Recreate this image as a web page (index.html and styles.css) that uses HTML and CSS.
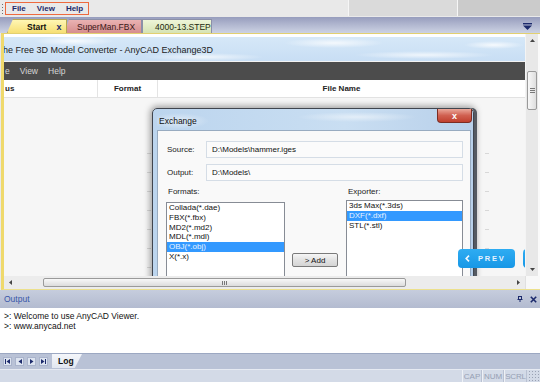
FILE: index.html
```html
<!DOCTYPE html>
<html>
<head>
<meta charset="utf-8">
<link rel="stylesheet" href="styles.css">
</head>
<body>
<div class="app">
  <div class="menubar">
    <div class="grip"></div>
    <div class="menu-box"><span>File</span><span>View</span><span>Help</span></div>
    <div class="mb-fill"></div>
    <div class="mb-block b1"></div>
    <div class="mb-block b2"></div>
  </div>
  <div class="tabstrip">
    <div class="tab tab-start"><span class="tab-label">Start</span><span class="tab-x">x</span></div>
    <div class="tab tab-fbx"><span class="tab-label">SuperMan.FBX</span></div>
    <div class="tab tab-step"><span class="tab-label">4000-13.STEP</span></div>
    <div class="tab-fill"></div>
    <svg class="tab-menu" width="9" height="7" viewBox="0 0 9 7"><rect x="0" y="0" width="9" height="1.4" fill="#1c2a6c"/><path d="M0 2.4H9L4.5 7Z" fill="#1c2a6c"/></svg>
  </div>
  <div class="doc">
    <div class="doc-main">
      <div class="view">
        <div class="banner">he Free 3D Model Converter - AnyCAD Exchange3D</div>
        <div class="darkbar"><span>e</span><span>View</span><span>Help</span></div>
        <div class="colhead">
          <div class="col c1">us</div>
          <div class="col c2">Format</div>
          <div class="col c3">File Name</div>
        </div>
        <div class="canvas">
          <div class="ticks ticks-left"></div>
          <div class="ticks ticks-right"></div>
          <div class="dialog">
            <div class="dlg-title">Exchange</div>
            <div class="dlg-close">x</div>
            <div class="dlg-client">
              <div class="field"><span class="field-label">Source:</span><div class="field-box">D:\Models\hammer.iges</div></div>
              <div class="field"><span class="field-label">Output:</span><div class="field-box">D:\Models\</div></div>
              <div class="lists">
                <div class="list-col fmt">
                  <div class="list-label">Formats:</div>
                  <ul class="listbox">
                    <li>Collada(*.dae)</li>
                    <li>FBX(*.fbx)</li>
                    <li>MD2(*.md2)</li>
                    <li>MDL(*.mdl)</li>
                    <li class="sel">OBJ(*.obj)</li>
                    <li>X(*.x)</li>
                  </ul>
                </div>
                <div class="add-col"><div class="add-btn">&gt; Add</div></div>
                <div class="list-col exp">
                  <div class="list-label">Exporter:</div>
                  <ul class="listbox">
                    <li>3ds Max(*.3ds)</li>
                    <li class="sel">DXF(*.dxf)</li>
                    <li>STL(*.stl)</li>
                  </ul>
                </div>
              </div>
            </div>
          </div>
          <div class="prev-btn"><svg width="5" height="7" viewBox="0 0 5 7"><path d="M4 0.6L1.2 3.5L4 6.4" stroke="#f2f8ff" stroke-width="1.6" fill="none"/></svg><span>PREV</span></div>
          <div class="next-btn"></div>
        </div>
      </div>
      <div class="vscroll">
        <div class="sb-btn"><svg width="5" height="3" viewBox="0 0 5 3"><path d="M0 3L2.5 0L5 3Z" fill="#444"/></svg></div>
        <div class="vthumb"><i></i><i></i><i></i></div>
        <div class="vtrack"></div>
        <div class="sb-btn"><svg width="5" height="3" viewBox="0 0 5 3"><path d="M0 0L2.5 3L5 0Z" fill="#444"/></svg></div>
      </div>
      <div class="edge"></div>
    </div>
    <div class="hscroll">
      <div class="sb-btn h"><svg width="3" height="5" viewBox="0 0 3 5"><path d="M3 0L0 2.5L3 5Z" fill="#444"/></svg></div>
      <div class="hthumb"><i></i><i></i><i></i></div>
      <div class="htrack"></div>
      <div class="sb-btn h"><svg width="3" height="5" viewBox="0 0 3 5"><path d="M0 0L3 2.5L0 5Z" fill="#444"/></svg></div>
      <div class="corner"></div>
    </div>
  </div>
  <div class="output">
    <div class="out-head">
      <span class="out-title">Output</span>
      <svg class="pin" width="6" height="6" viewBox="0 0 6 6"><path d="M1 0.5H5M1.5 0.5V3.5M4.5 0.5V3.5M0.5 3.5H5.5M3 3.5V6" stroke="#1c2a6c" stroke-width="1" fill="none"/></svg>
      <svg class="close" width="7" height="7" viewBox="0 0 7 7"><path d="M0.8 0.8L6.2 6.2M6.2 0.8L0.8 6.2" stroke="#1c2a6c" stroke-width="1.6"/></svg>
    </div>
    <div class="out-body">
      <div>&gt;: Welcome to use AnyCAD Viewer.</div>
      <div>&gt;: www.anycad.net</div>
    </div>
    <div class="out-tabs">
      <div class="nav">
        <div class="nav-btn"><svg width="5" height="5" viewBox="0 0 5 5"><path d="M0.5 0V5" stroke="#1c2a6c" stroke-width="1"/><path d="M5 0L1.5 2.5L5 5Z" fill="#1c2a6c"/></svg></div>
        <div class="nav-btn"><svg width="4" height="5" viewBox="0 0 4 5"><path d="M4 0L0.5 2.5L4 5Z" fill="#1c2a6c"/></svg></div>
        <div class="nav-btn"><svg width="4" height="5" viewBox="0 0 4 5"><path d="M0 0L3.5 2.5L0 5Z" fill="#1c2a6c"/></svg></div>
        <div class="nav-btn"><svg width="5" height="5" viewBox="0 0 5 5"><path d="M0 0L3.5 2.5L0 5Z" fill="#1c2a6c"/><path d="M4.5 0V5" stroke="#1c2a6c" stroke-width="1"/></svg></div>
      </div>
      <div class="log-tab">Log</div>
    </div>
  </div>
  <div class="status">
    <div class="pane">CAP</div>
    <div class="pane">NUM</div>
    <div class="pane">SCRL</div>
    <div class="sgrip"></div>
  </div>
</div>
</body>
</html>
```

FILE: styles.css
```css
* { box-sizing: border-box; }
html, body { margin: 0; padding: 0; }
body {
  width: 540px;
  height: 382px;
  overflow: hidden;
  font-family: "Liberation Sans", Arial, sans-serif;
  font-size: 8.5px;
  color: #111;
  background: #e9e9e9;
}
.app { display: flex; flex-direction: column; width: 540px; height: 382px; }

/* menubar */
.menubar { height: 17px; display: flex; align-items: center; background: #e9e9e9; }
.grip { width: 1px; height: 10px; margin-left: 2px; background: repeating-linear-gradient(#6f6f6f 0 1px, transparent 1px 3px); }
.menu-box {
  margin-left: 2px; height: 13px; display: flex; align-items: center; gap: 11px;
  padding: 0 5px 0 6px; border: 1.5px solid #ee6a3e; color: #1e2a6a; font-weight: 600; font-size: 8px;
}
.mb-fill { flex: 1; }
.mb-block { height: 16px; align-self: flex-start; border-left: 1px solid #f6f6f6; }
.b1 { width: 109px; background: #dadada; }
.b2 { width: 83px; background: #cbcbcb; }

/* tabs */
.tabstrip {
  height: 16px; display: flex; align-items: flex-end; padding-left: 7px;
  background: linear-gradient(#979dbd, #c2c8dc 80%, #ccd2e4);
}
.tab { height: 14px; display: flex; align-items: center; position: relative; border: 1px solid #8c90a8; border-bottom: none; }
.tab-label { white-space: nowrap; }
.tab-start {
  width: 60px; z-index: 2; padding-left: 19px; font-weight: bold; color: #111;
  background: linear-gradient(#fff6b4, #f6df74);
  clip-path: polygon(0 100%, 6px 0, 100% 0, 100% 100%);
  border-color: #b8a850;
}
.tab-x { margin-left: 10px; color: #1c2a6c; font-weight: bold; font-size: 9px; }
.tab-fbx {
  width: 77px; margin-left: -2px; padding-left: 11px; color: #3a1818;
  background: linear-gradient(#eab2b2, #d68e8e);
  clip-path: polygon(0 100%, 4px 0, 100% 0, 100% 100%);
}
.tab-step {
  width: 70px; padding-left: 12px; color: #1e2a10;
  background: linear-gradient(#eef5d8, #d6e3b4);
}
.tab-fill { flex: 1; }
.tab-menu { align-self: center; margin-right: 8px; margin-top: 2px; }

/* document */
.doc {
  height: 257px; margin-left: 1px; display: flex; flex-direction: column;
  border-top: 1px solid #e2d070; border-bottom: 1px solid #ece08c; border-left: 3px solid #efd96c;
  background: #fff;
}
.doc-main { flex: 1; display: flex; min-height: 0; }
.view { flex: 1; display: flex; flex-direction: column; padding-top: 3px; background: #fff; overflow: hidden; min-width: 0; }
.banner {
  height: 24px; font-size: 9px; color: #222; white-space: nowrap;
  padding-top: 2px; line-height: 22px; text-indent: -1px;
  background:
    radial-gradient(ellipse 40px 5px at 70px 4px, rgba(255,255,255,.8), transparent),
    radial-gradient(ellipse 60px 4px at 200px 20px, rgba(255,255,255,.7), transparent),
    radial-gradient(ellipse 50px 5px at 330px 6px, rgba(255,255,255,.75), transparent),
    radial-gradient(ellipse 70px 4px at 420px 18px, rgba(255,255,255,.7), transparent),
    radial-gradient(ellipse 30px 4px at 490px 8px, rgba(255,255,255,.8), transparent),
    linear-gradient(#d6e8f8, #c8def4);
}
.darkbar {
  height: 19px; background: #4c4c4c; display: flex; align-items: center; gap: 10px;
  padding-left: 1px; color: #d6d6d6; border-top: 1px solid #f2f2f2;
}
.colhead {
  height: 18px; display: flex; background: #fff; border-bottom: 1px solid #e2e2e2;
  font-size: 8px; font-weight: bold; color: #222;
}
.col { display: flex; align-items: center; }
.c1 { width: 93px; padding-left: 1px; }
.c2 { width: 60px; justify-content: center; border-left: 1px solid #e4e4e4; }
.c3 { flex: 1; justify-content: center; border-left: 1px solid #e4e4e4; }

.canvas { flex: 1; position: relative; background: #f6f6f6; overflow: hidden; }
.ticks { position: absolute; top: 37px; width: 4px; height: 140px; background: repeating-linear-gradient(transparent 0 18px, #d8d8d8 18px 19px); }
.ticks-left { left: 143px; }
.ticks-right { left: 481px; }

/* dialog */
.dialog {
  position: absolute; left: 148px; top: 10px; width: 322px; height: 200px;
  border: 1px solid #40454e; border-radius: 5px 5px 0 0;
  padding: 0 2px 4px 4px; display: flex; flex-direction: column;
  background: linear-gradient(90deg, #bcd5ee, #c9def2 60%, #b8d0ea);
  box-shadow: 3px 0 0 #555a62, 0 0 6px 2px rgba(0,0,0,.35);
}
.dlg-title {
  height: 21px; display: flex; align-items: center; padding-left: 2px; padding-top: 2px; color: #111;
  background:
    radial-gradient(ellipse 30px 8px at 22px 12px, rgba(255,255,255,.55), transparent),
    radial-gradient(ellipse 60px 5px at 200px 8px, rgba(255,255,255,.5), transparent);
}
.dlg-close {
  position: absolute; right: 1px; top: 0; width: 35px; height: 14px;
  border: 1px solid #7c2c22; border-top: none; border-radius: 0 0 4px 4px;
  background: linear-gradient(#eaa89a, #d06050 50%, #c0402e);
  color: #fff; font-weight: bold; font-size: 9px; display: flex; align-items: center; justify-content: center;
}
.dlg-client { flex: 1; background: #f9f9f9; border: 1px solid #98abc0; padding-top: 10px; }
.field { display: flex; align-items: center; padding-left: 9px; margin-bottom: 6px; font-size: 8px; }
.field-label { width: 39px; color: #222; }
.field-box {
  width: 257px; height: 17px; border: 1px solid #d5dde6; background: #fbfbfb;
  display: flex; align-items: center; padding-left: 5px; color: #111;
}
.lists { display: flex; align-items: flex-start; padding-left: 8px; font-size: 8px; }
.list-col { display: flex; flex-direction: column; }
.fmt { width: 119px; }
.exp { width: 117px; margin-left: 8px; }
.list-label { height: 10px; line-height: 10px; padding-left: 2px; color: #222; }
.listbox { margin: 0; padding: 0; list-style: none; height: 100px; border: 1px solid #878c95; background: #fff; }
.fmt .listbox { margin-top: 5px; }
.exp .listbox { margin-top: 3px; }
.listbox li { height: 9.8px; line-height: 9.8px; padding-left: 2px; color: #111; white-space: nowrap; }
.listbox li.sel { background: #3399ff; color: #e8f2ff; }
.add-col { width: 46px; margin-left: 7px; padding-top: 66px; }
.add-btn {
  height: 14px; border: 1px solid #7a7a7a; border-radius: 2px;
  background: linear-gradient(#f6f6f6, #e2e2e2 50%, #d4d4d4);
  display: flex; align-items: center; justify-content: center; color: #111;
}

.prev-btn {
  position: absolute; left: 454px; top: 151px; width: 57px; height: 19px; border-radius: 4px;
  background: linear-gradient(#2eacf2, #1797e6);
  display: flex; align-items: center; padding-left: 7px; gap: 8px;
  color: #e6f3ff; font-size: 7.5px; font-weight: bold; letter-spacing: 1.8px;
}
.next-btn { position: absolute; left: 519px; top: 151px; width: 20px; height: 19px; border-radius: 4px; background: linear-gradient(#2eacf2, #1797e6); }

/* scrollbars */
.vscroll { width: 13px; display: flex; flex-direction: column; background: #e8e8e8; border-left: 1px solid #f4f4f4; }
.sb-btn { width: 12px; height: 13px; display: flex; align-items: center; justify-content: center; flex-shrink: 0; }
.vthumb {
  margin: 24px 0 0 1px; width: 10px; height: 39px; border: 1px solid #9a9a9a; border-radius: 2px;
  background: linear-gradient(90deg, #f8f8f8, #dedede);
  display: flex; flex-direction: column; align-items: center; justify-content: center; gap: 1px;
}
.vthumb i { display: block; width: 5px; height: 1px; background: #777; }
.vtrack { flex: 1; }
.edge { width: 2px; background: #fafafa; }
.hscroll { height: 13px; display: flex; align-items: center; background: #ececec; }
.sb-btn.h { width: 13px; }
.hthumb {
  margin-left: 26px; width: 363px; height: 9px; border: 1px solid #9a9a9a; border-radius: 2px;
  background: linear-gradient(#f8f8f8, #dcdcdc);
  display: flex; align-items: center; justify-content: center; gap: 1px;
}
.hthumb i { display: block; width: 1px; height: 4px; background: #777; }
.htrack { flex: 1; }
.corner { width: 15px; height: 13px; background: #f8f8f8; border-left: 1px solid #e0e0e0; }

/* output */
.output { display: flex; flex-direction: column; }
.out-head {
  height: 18px; display: flex; align-items: center; padding: 0 3px 0 4px;
  background: linear-gradient(#c6cddd, #b3bbd0);
}
.out-title { flex: 1; color: #3856a8; }
.pin { margin-right: 7px; }
.out-body { height: 45px; background: #fff; padding: 4px 0 0 4px; line-height: 9.5px; color: #111; }
.out-tabs {
  height: 16px; display: flex; align-items: stretch; background: #b9c2d6; border-top: 1px solid #9ca8c2;
}
.nav { display: flex; align-items: center; gap: 3px; padding-left: 3px; width: 52px; }
.nav-btn {
  width: 9px; height: 9px; background: #dde4f0; border: 1px solid #aab4cc;
  display: flex; align-items: center; justify-content: center;
}
.log-tab {
  width: 30px; background: linear-gradient(#f4f6fa, #e2e7f0); font-weight: bold; color: #111;
  padding-left: 6px; display: flex; align-items: center; font-size: 8.5px;
  clip-path: polygon(0 0, 100% 0, 76% 100%, 0 100%);
  margin-bottom: 1px;
}

/* status */
.status {
  height: 13px; display: flex; justify-content: flex-end; align-items: stretch;
  background: #d3dae7; border-top: 1px solid #e6eaf2;
}
.pane {
  display: flex; align-items: center; justify-content: center; color: #96a0b4; font-size: 8px;
  border-left: 1px solid #eef1f6; border-right: 1px solid #b9c1d2; white-space: nowrap;
}
.pane:nth-child(1) { width: 20px; }
.pane:nth-child(2) { width: 22px; }
.pane:nth-child(3) { width: 23px; letter-spacing: -0.2px; }
.sgrip { width: 12px; background: radial-gradient(circle, #9aa2b4 0.6px, transparent 0.9px) 0 0 / 3px 3px; margin-left: 1px; }
```
